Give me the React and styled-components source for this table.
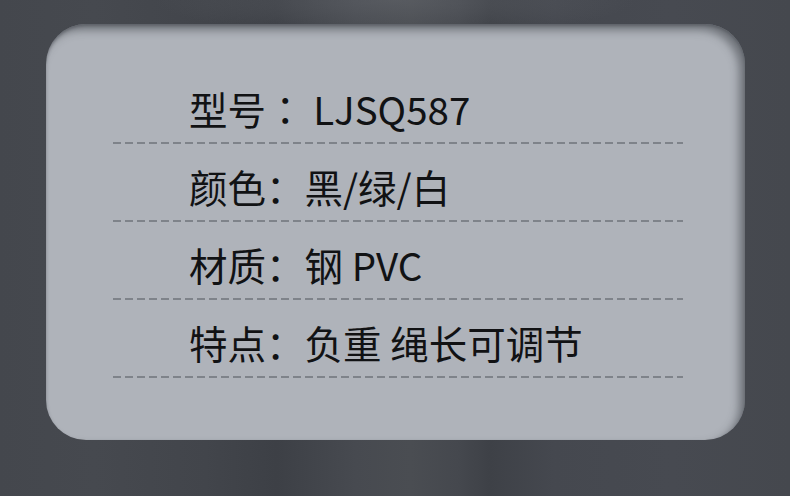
import React from "react"
import styled, { createGlobalStyle } from "styled-components"

const GlobalStyle = createGlobalStyle`
  html, body {
    margin: 0;
    padding: 0;
  }
  body {
    font-family: "Noto Sans CJK SC", "Noto Sans", sans-serif;
  }
`

const specs = [
  { label: "型号", value: "LJSQ587", centered: true },
  { label: "颜色", value: "黑/绿/白" },
  { label: "材质", value: "钢 PVC" },
  { label: "特点", value: "负重 绳长可调节" },
]

export default function App() {
  return (
    <>
      <GlobalStyle />
      <Page>
        <Card>
          {specs.map((s) => (
            <Row key={s.label}>
              <Text>
                {s.label}
                <Colon $centered={s.centered}>：</Colon>
                {s.centered ? " " : ""}
                {s.value}
              </Text>
              <Dashes />
            </Row>
          ))}
        </Card>
      </Page>
    </>
  )
}

const Page = styled.div`
  width: 790px;
  height: 496px;
  box-sizing: border-box;
  padding: 24px 45px 56px 46px;
  overflow: hidden;
  background:
    radial-gradient(ellipse 240px 36px at 50% 0%, rgba(105, 108, 114, 0.45), rgba(105, 108, 114, 0) 100%),
    linear-gradient(
      90deg,
      #44474d 0%,
      #46494f 12%,
      #42454b 26%,
      #3d4046 35%,
      #474a50 45%,
      #4a4d52 52%,
      #45484e 58%,
      #3e4147 62%,
      #45484f 70%,
      #474a51 85%,
      #45484e 100%
    );
`

const Card = styled.div`
  height: 100%;
  box-sizing: border-box;
  padding: 62px 62px 0 67px;
  border-radius: 40px;
  background: #afb3ba;
  box-shadow:
    inset -6px 6px 9px rgba(50, 53, 60, 0.5),
    inset 0 2px 3px rgba(50, 53, 60, 0.35);
`

const Row = styled.div`
  display: flex;
  flex-direction: column;
  height: 78px;
`

const Text = styled.div`
  padding-left: 76px;
  height: 44px;
  line-height: 44px;
  font-size: 38.5px;
  color: #111214;
  white-space: pre;
`

const Colon = styled.span`
  font-family: ${(p) =>
    p.$centered ? `"Noto Sans CJK TC", sans-serif` : `"Noto Sans CJK SC", sans-serif`};
`

const Dashes = styled.div`
  margin-top: 12px;
  height: 2px;
  background-image: linear-gradient(
    90deg,
    rgba(118, 122, 129, 0.85) 0 8px,
    transparent 8px 12px
  );
  background-size: 12px 2px;
`
